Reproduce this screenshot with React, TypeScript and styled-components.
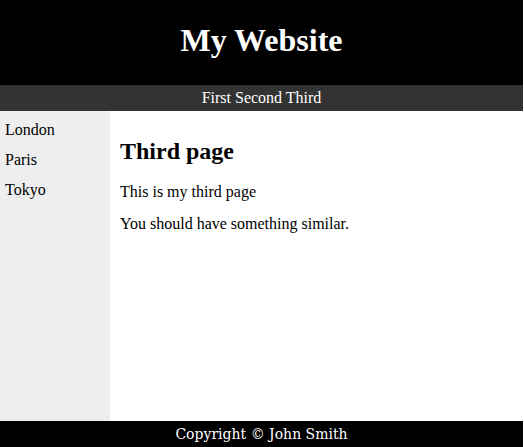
import React from "react";
import styled, { createGlobalStyle } from "styled-components";

const GlobalStyle = createGlobalStyle`
  html, body {
    margin: 0;
    padding: 0;
    background: #fff;
  }
  body {
    font-family: "Liberation Serif", "Times New Roman", serif;
    font-size: 16px;
  }
`;

const Page = styled.div`
  width: 523px;
  height: 447px;
  display: flex;
  flex-direction: column;
`;

const Header = styled.header`
  height: 85px;
  padding-bottom: 4px;
  box-sizing: border-box;
  background: #000;
  color: #fff;
  display: flex;
  align-items: center;
  justify-content: center;

  h1 {
    margin: 0;
    font-size: 32px;
    font-weight: bold;
  }
`;

const Nav = styled.nav`
  height: 26px;
  background: #333;
  color: #fff;
  display: flex;
  align-items: center;
  justify-content: center;
  font-size: 16px;
`;

const Middle = styled.div`
  flex: 1;
  display: flex;
`;

const Sidebar = styled.aside`
  width: 110px;
  background: #eee;
  padding: 10px 5px;
  box-sizing: border-box;
  display: flex;
  flex-direction: column;
  gap: 12px;
  line-height: 18px;
`;

const Main = styled.main`
  flex: 1;
  padding: 26px 10px 0;

  h2 {
    margin: 0 0 18px;
    font-size: 24px;
    line-height: 28px;
  }

  p {
    margin: 0 0 14px;
    line-height: 18px;
  }
`;

const Footer = styled.footer`
  height: 26px;
  background: #000;
  color: #fff;
  display: flex;
  align-items: center;
  justify-content: center;
  font-family: "DejaVu Serif", Georgia, serif;
  font-size: 14px;
`;

const App: React.FC = () => {
  return (
    <>
      <GlobalStyle />
      <Page>
        <Header>
          <h1>My Website</h1>
        </Header>
        <Nav>First Second Third</Nav>
        <Middle>
          <Sidebar>
            {["London", "Paris", "Tokyo"].map((city) => (
              <div key={city}>{city}</div>
            ))}
          </Sidebar>
          <Main>
            <h2>Third page</h2>
            <p>This is my third page</p>
            <p>You should have something similar.</p>
          </Main>
        </Middle>
        <Footer>Copyright © John Smith</Footer>
      </Page>
    </>
  );
};

export default App;
